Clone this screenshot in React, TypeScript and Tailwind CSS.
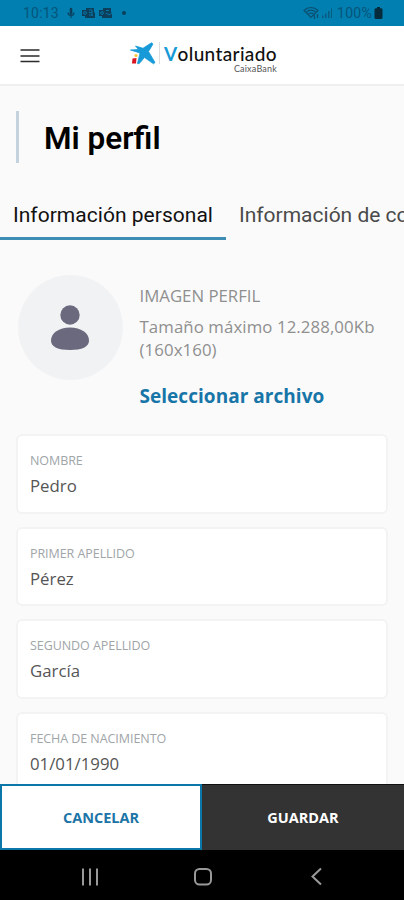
import React from "react"

const FIELDS = [
  { label: "NOMBRE", value: "Pedro" },
  { label: "PRIMER APELLIDO", value: "Pérez" },
  { label: "SEGUNDO APELLIDO", value: "García" },
  { label: "FECHA DE NACIMIENTO", value: "01/01/1990" },
]

function OutlookGlyph({ flag }: { flag?: boolean }) {
  return (
    <svg width="15" height="12" viewBox="0 0 15 12" fill="none">
      <path d="M5 1h8v4l1 1v5H4V9H1V3h4z" fill="#0b3f5b" />
      <circle cx="4" cy="6" r="1.4" stroke="#077dae" strokeWidth="0.9" />
      {flag ? (
        <path d="M8 3.5h3M8 6l3 2 3-2" stroke="#077dae" strokeWidth="0.9" />
      ) : (
        <path d="M8 3h3M8 5.5h3M8 8h4M11 3v6" stroke="#077dae" strokeWidth="0.8" />
      )}
    </svg>
  )
}

function StatusBar() {
  return (
    <div className="flex h-[26px] shrink-0 items-center bg-[#007fb0] pl-[23px] pr-[21px] font-['Roboto',sans-serif] text-[#07547a]">
      <span className="w-[37px] whitespace-nowrap text-[14px] leading-[26px] tracking-[0.2px]">10:13</span>
      <svg className="ml-[7px]" width="8" height="12" viewBox="0 0 8 12" fill="none" stroke="#0b3f5b">
        <path d="M4 2v4.5" strokeWidth="2.6" strokeLinecap="round" />
        <path d="M1 5.5c0 4 6 4 6 0M4 8.5V11" strokeWidth="1.1" />
      </svg>
      <div className="ml-[6px] flex gap-[2px]">
        <OutlookGlyph />
        <OutlookGlyph flag />
      </div>
      <span className="ml-[9px] size-1 rounded-full bg-[#0b3f5b]" />
      <div className="ml-auto flex items-center">
        <svg width="17" height="14" viewBox="0 0 17 14" fill="none" stroke="#0b4f70" strokeWidth="1.2">
          <path d="M1 4.5c4-4 10-4 14 0L8 11.5z" />
          <path d="M3.5 6c3-2.4 6-2.4 9 0M5.5 8c2-1.3 3.5-1.3 5 0" />
          <path d="M11.5 9v4M14.5 8v4" />
        </svg>
        <svg className="ml-px" width="12" height="12" viewBox="0 0 12 12" fill="#0b5a7f">
          <path d="M1 8.5h1.5V11H1zM4 6.5h1.5V11H4zM7 4h1.5v7H7zM10 1.5h1V11h-1z" />
        </svg>
        <span className="ml-[4px] w-[37px] whitespace-nowrap text-[14px] leading-[26px] tracking-[0.3px]">100%</span>
        <svg width="9" height="12" viewBox="0 0 9 12" fill="#062b3d">
          <path d="M3 0h3v1.2h1.5l1 1V11l-1 1h-6l-1-1V2.2l1-1H3z" />
        </svg>
      </div>
    </div>
  )
}

function Logo() {
  return (
    <div className="flex">
      <svg className="mt-[16px]" width="26" height="23" viewBox="0 0 26 23">
        <path
          d="M0.5 8 8.5 7.5 5.5 4 13 6.3 21.5 0.8 23 2 18.5 9.5 25 20.5 23.5 21.8 14.5 15.5 9 21.8 7.5 21.5 10 11z"
          fill="#179ad7"
          stroke="#179ad7"
          strokeWidth="0.8"
          strokeLinejoin="round"
        />
        <circle cx="6" cy="13.5" r="1.6" fill="#f7cb3b" />
        <path d="M2.5 16.5 6.5 16l-.5 5.5H2z" fill="#d91523" />
      </svg>
      <span className="ml-[3px] mt-[16px] h-[22px] w-px bg-[#dddddd]" />
      <div className="ml-[4px] w-[113px] whitespace-nowrap">
        <p className="mt-[17px] font-['Lato',sans-serif] text-[19px] font-medium leading-[21px] tracking-[0.36px] text-[#111111]">
          <span className="font-bold text-[#179ad7]">V</span>oluntariado
        </p>
        <p className="text-right font-['Lato',sans-serif] text-[9px] leading-[9px] tracking-[0.2px] text-[#555555]">
          CaixaBank
        </p>
      </div>
    </div>
  )
}

function Header() {
  return (
    <header className="flex h-[60px] shrink-0 border-b-2 border-[#efefef] bg-white">
      <svg className="ml-[20px] mt-[22px]" width="20" height="16" viewBox="0 0 20 16" stroke="#2b2b2b" strokeWidth="1.5">
        <path d="M0.5 2h19M0.5 8h19M0.5 13.5h19" />
      </svg>
      <div className="ml-[90px]">
        <Logo />
      </div>
    </header>
  )
}

function Tabs() {
  return (
    <div className="mt-[40px] flex shrink-0 overflow-hidden whitespace-nowrap font-['Roboto',sans-serif] text-[21px] leading-[24px]">
      <div className="h-[37px] w-[226px] shrink-0 border-b-[3px] border-[#3d8db5] pl-[13px] font-[450] tracking-[0.03px] text-[#111111]">
        Información personal
      </div>
      <div className="pl-[13px] text-[#4a4a4a]">Información de contacto</div>
    </div>
  )
}

function ProfilePicture() {
  return (
    <section className="ml-[18px] mt-[35px] flex h-[133px] shrink-0">
      <div className="flex size-[105px] items-center justify-center rounded-full bg-[#f1f2f4]">
        <svg className="mr-[2px]" width="40" height="46" viewBox="0 0 40 46" fill="#6b697d">
          <circle cx="20" cy="10" r="9.7" />
          <path d="M1 35.5C1 28 9 22.5 20 22.5S39 28 39 35.5C39 42 32 45 20 45S1 42 1 35.5z" />
        </svg>
      </div>
      <div className="ml-[16.5px] mt-[9px] whitespace-nowrap text-[16.8px] text-[#8f8f8f]">
        <p className="leading-[24px]">IMAGEN PERFIL</p>
        <p className="mt-[7px] leading-[23px] tracking-[0.1px]">
          Tamaño máximo 12.288,00Kb
          <br />
          (160x160)
        </p>
        <p className="mt-[22px] text-[19px] font-bold leading-[26px] tracking-[0.04px] text-[#1775a8]">
          Seleccionar archivo
        </p>
      </div>
    </section>
  )
}

export default function App() {
  return (
    <div className="flex h-[900px] w-[404px] flex-col overflow-hidden bg-[#fafafa] font-['Open_Sans',sans-serif]">
      <StatusBar />
      <Header />
      <main className="flex min-h-0 flex-1 flex-col overflow-hidden">
        <h1 className="ml-[16px] mt-[25px] h-[52px] shrink-0 border-l-[3px] border-[#c4d2de] pl-[25px] font-['Roboto',sans-serif] text-[31.5px] font-semibold leading-[55px] text-black">
          Mi perfil
        </h1>
        <Tabs />
        <ProfilePicture />
        <div className="mx-[16px] mt-[26px] flex flex-col gap-[13px]">
          {FIELDS.map((field) => (
            <div
              key={field.label}
              className="h-[79.5px] shrink-0 rounded-[6px] border-2 border-[#f3f3f3] bg-white pl-[12px] pt-[16px]"
            >
              <p className="text-[12.5px] leading-[18px] tracking-[-0.06px] text-[#a0a5a8]">{field.label}</p>
              <p className="mt-[4px] text-[16.8px] leading-[24px] text-[#555555]">{field.value}</p>
            </div>
          ))}
        </div>
      </main>
      <div className="flex h-[66px] shrink-0 text-[14.5px] font-bold">
        <button className="w-[202px] border-2 border-[#0b76a8] bg-white pt-px text-[#1c75a6]">CANCELAR</button>
        <button className="flex-1 border-t border-[#111111] bg-[#333333] text-white">GUARDAR</button>
      </div>
      <nav className="flex h-[50px] shrink-0 bg-black">
        <svg width="404" height="50" viewBox="0 0 404 50" fill="none" stroke="#999999" strokeWidth="2">
          <path d="M83 18.5v17M90 18.5v17M97 18.5v17" />
          <rect x="195" y="19" width="16" height="15.5" rx="4.5" />
          <path d="M321 18.5 312.5 26.5 321 34.5" />
        </svg>
      </nav>
    </div>
  )
}
